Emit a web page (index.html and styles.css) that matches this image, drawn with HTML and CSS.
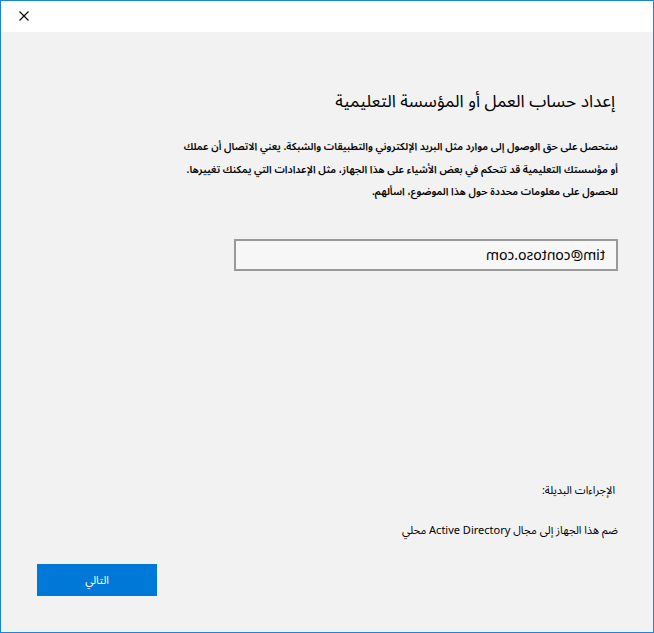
FILE: index.html
```html
<!DOCTYPE html>
<html lang="ar">
<head>
<meta charset="utf-8">
<title>إعداد حساب العمل أو المؤسسة التعليمية</title>
<link rel="stylesheet" href="styles.css">
</head>
<body>
<div class="window">
  <div class="titlebar">
    <svg class="close" width="10" height="10" viewBox="0 0 10 10" aria-label="إغلاق">
      <path d="M0.5 0.5 L9.5 9.5 M9.5 0.5 L0.5 9.5" stroke="#000" stroke-width="1.1" fill="none"/>
    </svg>
  </div>
  <div class="content" dir="rtl">
    <h1 class="title">إعداد حساب العمل أو المؤسسة التعليمية</h1>
    <p class="desc">ستحصل على حق الوصول إلى موارد مثل البريد الإلكتروني والتطبيقات والشبكة. يعني الاتصال أن عملك<br>أو مؤسستك التعليمية قد تتحكم في بعض الأشياء على هذا الجهاز، مثل الإعدادات التي يمكنك تغييرها.<br>للحصول على معلومات محددة حول هذا الموضوع، اسألهم.</p>
    <div class="field"><span class="mirror">tim@contoso.com</span></div>
    <div class="spacer"></div>
    <div class="alt-label">الإجراءات البديلة:</div>
    <div class="alt-link">ضم هذا الجهاز إلى مجال Active Directory محلي</div>
    <div class="actions"><button class="next">التالي</button></div>
  </div>
</div>
</body>
</html>
```
FILE: styles.css
```css
html, body {
  margin: 0;
  padding: 0;
}
body {
  font-family: "Noto Sans", "Noto Sans Arabic", sans-serif;
  color: #000;
}
.window {
  width: 654px;
  height: 633px;
  box-sizing: border-box;
  border: 1px solid #1a86d9;
  display: flex;
  flex-direction: column;
  background: #f2f2f2;
}
.titlebar {
  height: 31px;
  background: #ffffff;
  padding: 10px 0 0 18px;
  box-sizing: border-box;
  flex: none;
}
.close {
  display: block;
}
.content {
  flex: 1;
  display: flex;
  flex-direction: column;
  padding: 0 35px 36px 36px;
}
.title {
  margin: 55px 3px 0 0;
  font-family: "Noto Sans Arabic", sans-serif;
  font-size: 17.3px;
  font-weight: normal;
  line-height: 30px;
}
.desc {
  margin: 19px 0 0 0;
  font-family: "Noto Sans Arabic", sans-serif;
  font-size: 10.3px;
  line-height: 22.5px;
  font-weight: 600;
  white-space: nowrap;
}
.field {
  margin: 35px 0 0 0;
  width: 384px;
  height: 32px;
  box-sizing: border-box;
  border: 2px solid #999999;
  background: #f7f7f7;
  display: flex;
  align-items: center;
  padding: 0 11px;
  font-size: 14px;
}
.mirror {
  display: inline-block;
  transform: scaleX(-1);
  direction: ltr;
}
.spacer {
  flex: 1;
}
.alt-label {
  font-family: "Noto Sans", "Noto Sans Arabic", sans-serif;
  font-size: 11px;
  line-height: 20px;
  margin-right: 3px;
}
.alt-link {
  font-size: 11px;
  line-height: 20px;
  margin-top: 20px;
}
.actions {
  margin-top: 24px;
  display: flex;
  justify-content: flex-end;
}
.next {
  width: 120px;
  height: 32px;
  background: #0078d7;
  color: #fff;
  border: none;
  font-family: "Noto Sans Arabic", sans-serif;
  font-size: 11px;
  padding: 0;
}
```
